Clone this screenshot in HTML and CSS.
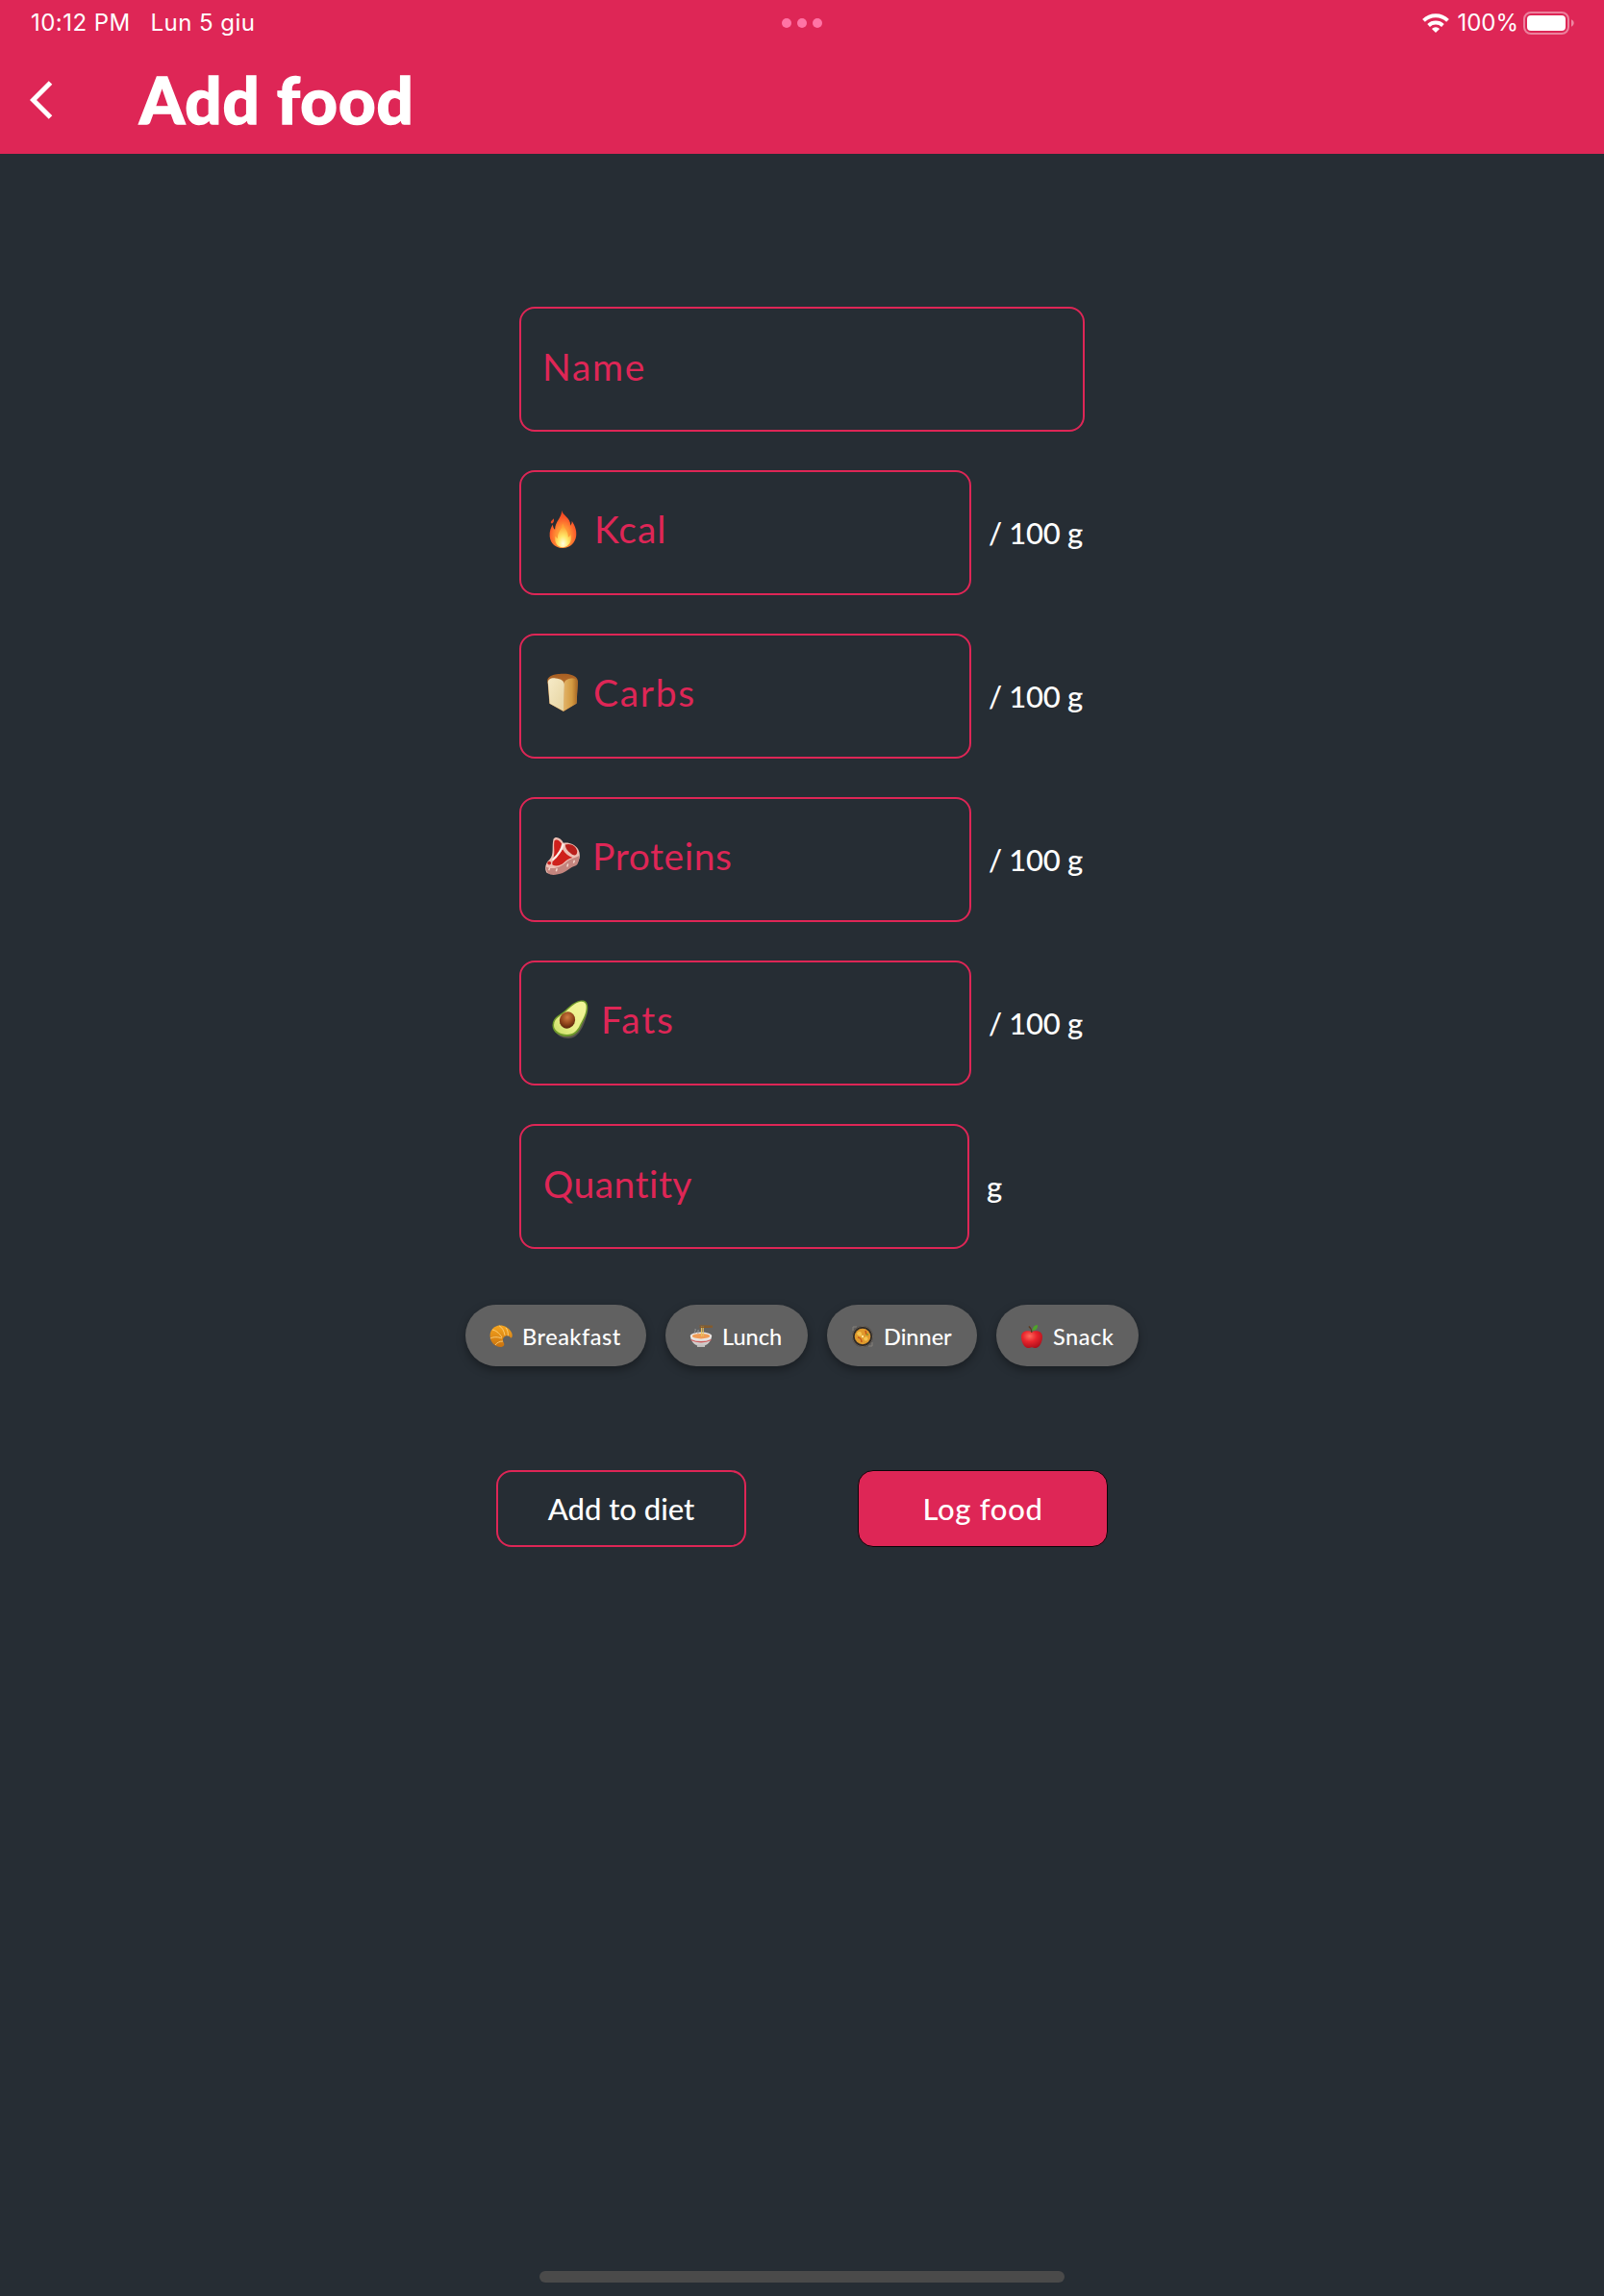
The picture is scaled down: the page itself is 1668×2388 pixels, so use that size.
FILE: index.html
```html
<!DOCTYPE html>
<html lang="en">
<head>
<meta charset="utf-8">
<title>Add food</title>
<link rel="stylesheet" href="styles.css">
</head>
<body>
<svg class="defs" width="0" height="0" aria-hidden="true">
  <defs>
    <radialGradient id="flame" cx=".5" cy=".7" r=".7"><stop offset="0" stop-color="#ffb63a"/><stop offset=".4" stop-color="#ff8f35"/><stop offset=".7" stop-color="#fb5a2a"/><stop offset="1" stop-color="#e93c1c"/></radialGradient>
    <radialGradient id="flameCore" cx=".5" cy=".85" r=".7"><stop offset="0" stop-color="#fffde0"/><stop offset=".45" stop-color="#ffe869"/><stop offset="1" stop-color="#ffa033"/></radialGradient>
    <linearGradient id="crust" x1="0" y1="0" x2="0" y2="1"><stop offset="0" stop-color="#a85f22"/><stop offset="1" stop-color="#d99a4e"/></linearGradient>
    <linearGradient id="crumb" x1="0" y1="0" x2="1" y2="1"><stop offset="0" stop-color="#f7ebc8"/><stop offset="1" stop-color="#e5d3a0"/></linearGradient>
    <linearGradient id="loafSide" x1="0" y1="0" x2="1" y2="0"><stop offset="0" stop-color="#e2b469"/><stop offset=".6" stop-color="#d39a40"/><stop offset="1" stop-color="#a56524"/></linearGradient>
    <linearGradient id="avoFlesh" x1="1" y1="0" x2="0" y2="1"><stop offset="0" stop-color="#f3f59a"/><stop offset=".6" stop-color="#e9f08a"/><stop offset="1" stop-color="#c6dc62"/></linearGradient>
    <radialGradient id="pit" cx=".42" cy=".35" r=".65"><stop offset="0" stop-color="#cf7d42"/><stop offset=".6" stop-color="#93461b"/><stop offset="1" stop-color="#5c260b"/></radialGradient>
    <linearGradient id="pastry" x1="0" y1="0" x2="0" y2="1"><stop offset="0" stop-color="#f6a51e"/><stop offset="1" stop-color="#c9720f"/></linearGradient>
    <linearGradient id="bowl" x1="0" y1="0" x2="0" y2="1"><stop offset="0" stop-color="#f7f4f2"/><stop offset="1" stop-color="#bdbab9"/></linearGradient>
    <radialGradient id="apple" cx=".4" cy=".3" r=".75"><stop offset="0" stop-color="#ff6a5c"/><stop offset=".45" stop-color="#e8242c"/><stop offset="1" stop-color="#a80f1b"/></radialGradient>
  </defs>
</svg>

<header class="header">
  <div class="status">
    <div class="status-side">
      <span>10:12 PM</span>
      <span>Lun 5 giu</span>
    </div>
    <div class="dots"><i></i><i></i><i></i></div>
    <div class="status-side status-right">
      <svg class="wifi" viewBox="0 0 28 20"><path d="M14 20 9.900 15.900a6.200 6.200 0 0 1 8.200 0z" fill="#fff"/><path d="M6.600 12.500a10.800 10.800 0 0 1 14.800 0M1.500 7.300a17.900 17.900 0 0 1 25 0" fill="none" stroke="#fff" stroke-width="3.900"/></svg>
      <span class="charge">100%</span>
      <svg class="battery" viewBox="0 0 54 24"><rect x="1" y="1" width="46" height="22" rx="7" fill="none" stroke="#fff" stroke-opacity=".42" stroke-width="2"/><rect x="4" y="4" width="40" height="16" rx="4" fill="#fff"/><path d="M50 8.300c3.600 1.600 3.600 5.800 0 7.400z" fill="#fff" fill-opacity=".45"/></svg>
    </div>
  </div>
  <div class="nav">
    <svg class="back" viewBox="0 0 24 40"><path d="M21.500 2 3.500 20l18 18" fill="none" stroke="#fff" stroke-width="5"/></svg>
    <h1 class="title">Add food</h1>
  </div>
</header>

<main class="main">
  <form class="form">
    <div class="row">
      <div class="field field-wide"><span class="label-name">Name</span></div>
    </div>
    <div class="row">
      <div class="field field-up">
        <svg class="emoji" viewBox="0 0 36 48"><path d="M17 1c.6 6 11 9 11 19 1-1.500 1.800-3.300 1.600-5.500C33 19 36 26 35 33c-1.200 9-8 15-16.500 15S3 43 2 33.500C1.400 27 3.500 22 5.800 18.500c.4 3 1 5 2.700 6.500C9 14 17 11 17 1z" fill="url(#flame)"/><path d="M6.500 11c1.500 2 .7 4-.4 5.500-.8 1-2.100 1-2.600 0C2.700 14.500 6 13 6.500 11z" fill="#e84d26"/><path d="M18 17c2 6 7.500 10 7 17.500 1.500-.7 2.500-2 3-3.500C30.500 39 26 47 18.500 47S7.500 41 9 33c.8 1.500 1.700 2.500 3 3C11 28 18 24 18 17z" fill="url(#flameCore)"/></svg>
        <span class="label-kcal">Kcal</span>
      </div>
      <span class="unit">/ 100 g</span>
    </div>
    <div class="row">
      <div class="field field-up">
        <svg class="emoji" viewBox="0 0 36 44"><path d="M1 11C-1 3 9 1 18 .8S37 3 35.500 12L34 35 19 44 3 35z" fill="url(#crust)"/><path d="M20 13c-.5-6 6-7 10-7 5 .5 6 3 5 8l-1 20.500L19 43.500z" fill="url(#loafSide)"/><path d="M1.500 13C0 7 5 5.500 10 6c6 .4 11 3 10 9L19 43.500 3.300 35z" fill="url(#crumb)"/></svg>
        <span class="label-carbs">Carbs</span>
      </div>
      <span class="unit">/ 100 g</span>
    </div>
    <div class="row">
      <div class="field field-up">
        <svg class="emoji" viewBox="0 0 38 42"><path d="M9 3c2-4 8-2 11 4 6-1 13 2 16 7 3 6 2 12-2 16-6 2-8 5-15 8-6 2-13 4-17 2-3-4-2-11 3-15 5-5 2-14 4-22z" fill="#eebfb4"/><path d="M1 33c8 4 16 0 22-5 4-4 9-4 14-7 0 6-1 10-4 11-6 2-8 5-14 8-6 2-13 3-16 0-1-2-2-4-2-7z" fill="#c4857e"/><path d="M4 37l1-3M12 38l1-3M24 33l1-3M31 29l1-3" stroke="#f5d9cf" stroke-width="1.500"/><path d="M10 5c2-3 6-1 8 3-1 6-4 11-9 15 2-6 0-11 1-18z" fill="#ce1f1c"/><path d="M22 9c5-2 12 1 13 7 0 4-2 5-5 4-4-3-8-6-8-11z" fill="#b9201c"/><path d="M19 14c3 5 7 8 11 9-4 1-6 2-9 5-4 4-9 5-13 3-2-5 7-10 11-17z" fill="#cf211c"/><path d="M20 8c-2 7-5 12-12 18" fill="none" stroke="#fdeee8" stroke-width="2"/><circle cx="4.500" cy="29" r="2" fill="#c7221f"/></svg>
        <span class="label-proteins">Proteins</span>
      </div>
      <span class="unit">/ 100 g</span>
    </div>
    <div class="row">
      <div class="field field-up field-inset">
        <svg class="emoji" viewBox="0 0 38 40"><path d="M33 2c6 2 5 10 2 18-3 9-8 20-18 20-6 0-12-3-14-8z" fill="#5a574d"/><path d="M29 .8c6-1.500 9 2 8 9-1 8-4 11-6.500 17C27.500 34 23 38 15.500 38S0 33.500.5 26C1 17 9 15.500 14 10.500 19 6 23 2 29 .8z" fill="#6f9a2b"/><path d="M29 2c5-1 7.500 2 6.500 8-1 7-4 11-6.500 16-2.500 6-7 10-13.500 10S1.500 32 2 26c.6-8 8-9.500 13-14.500C20 7 24 3 29 2z" fill="url(#avoFlesh)"/><ellipse cx="16" cy="21" rx="8" ry="8.800" transform="rotate(25 16 21)" fill="url(#pit)"/></svg>
        <span class="label-fats">Fats</span>
      </div>
      <span class="unit">/ 100 g</span>
    </div>
    <div class="row">
      <div class="field field-qty"><span class="label-quantity">Quantity</span></div>
      <span class="unit">g</span>
    </div>
  </form>

  <div class="chips">
    <div class="chip chip-breakfast">
      <svg class="chip-icon" viewBox="0 0 24 24"><path d="M8 1C13-.5 20 2 23 8c1.500 3 .5 6-1 5.500-1-2-3-2.500-5-2-3 1-4 4-2 7.500 1 2-.5 3.500-2.500 4C6 23.500 1 18 .6 12 .4 7 3 2.500 8 1z" fill="url(#pastry)"/><path d="M3 5c3 .5 7 3 10 8M10 .8c3 1.500 5 5 6 10M.9 14c4-2 8-1.500 12 0M17 2.800c1.500 2 2.500 5 2.300 8.500M6 21c1.500-2.500 4.500-4 8-4" fill="none" stroke="#ffd98a" stroke-width=".8"/></svg>
      <span>Breakfast</span>
    </div>
    <div class="chip chip-lunch">
      <svg class="chip-icon" viewBox="0 0 24 24"><path d="M1 11h22c0 5-3 9-7 10.500V23H8v-1.500C4 20 1 16 1 11z" fill="url(#bowl)"/><ellipse cx="12" cy="11.500" rx="11.300" ry="4" fill="#ece7e3"/><ellipse cx="12" cy="11.700" rx="9.200" ry="2.700" fill="#ef9b55"/><path d="M1.500 15.500c6 3 15 3 21 0" fill="none" stroke="#cf5a5a" stroke-width="1.300"/><path d="M12.500 12V1.500M14.200 12V1.500" stroke="#e8c05c" stroke-width="1.100"/><path d="M10.500.9 24 1.200M10.500 2.600 24 2.200" stroke="#8f5a1d" stroke-width="1"/><path d="M6 9c-1.500-2 1-3 0-5M9 9c-1-2 .8-2.500 0-4" fill="none" stroke="#9a9a9a"/></svg>
      <span>Lunch</span>
    </div>
    <div class="chip chip-dinner">
      <svg class="chip-icon" viewBox="0 0 24 24"><path d="M2 6V2h4M18 22h4v-4" fill="none" stroke="#85807a" stroke-width="1"/><circle cx="12" cy="12" r="11" fill="#302b28"/><circle cx="12" cy="12" r="10.600" fill="none" stroke="#837c75" stroke-width=".7"/><circle cx="12" cy="12" r="8.300" fill="#e09a2c"/><path d="M6 9c2-3 4-3 5 0s-3 4-5 0zM13 14c2-3 5-2 4.500 1-1 2.500-4 2-4.500-1z" fill="#f4c34e"/><path d="M7 13c2 0 4 2 4 5M15 6l1 4" fill="none" stroke="#c4551b" stroke-width="1.500"/><circle cx="12" cy="12" r="1.200" fill="#ffe79a"/><circle cx="17" cy="10" r="1" fill="#7f9b2c"/></svg>
      <span>Dinner</span>
    </div>
    <div class="chip chip-snack">
      <svg class="chip-icon" viewBox="0 0 24 24"><path d="M12 7.500c3-2 11-2 11 5 0 6-3.500 11.500-7 11.500-2 0-2.500-.8-4-.8s-2 .8-4 .8c-3.500 0-7-5.500-7-11.500 0-7 8-7 11-5z" fill="url(#apple)"/><path d="M11.800 8c0-3-1-5-3-6.500" fill="none" stroke="#5c3a1c" stroke-width="1.200"/><path d="M12.500 6c0-3 2-6 5.500-6 .5 3-1.500 6-5.500 6z" fill="#4fa32b"/></svg>
      <span>Snack</span>
    </div>
  </div>

  <div class="actions">
    <div class="btn btn-outline">Add to diet</div>
    <div class="btn btn-solid">Log food</div>
  </div>
</main>
<div class="home-bar"></div>
</body>
</html>
```
FILE: styles.css
```css
* { box-sizing: border-box; }
html, body { height: 100%; }
body {
  margin: 0;
  display: flex;
  flex-direction: column;
  background: #262d34;
  color: #fff;
  font-family: Lato, "Liberation Sans", sans-serif;
}
.defs { position: absolute; }
span { white-space: nowrap; }

.header { height: 160px; background: #de2656; flex: none; }
.status {
  display: grid;
  grid-template-columns: 1fr auto 1fr;
  height: 48px;
  padding: 0 30px 0 32px;
  align-items: center;
  font: 400 24px/28px Inter, sans-serif;
  letter-spacing: .45px;
}
.status-side { display: flex; align-items: center; gap: 21px; }
.status-right { justify-content: flex-end; gap: 0; }
.dots { display: flex; gap: 6px; margin-left: -2px; }
.dots i { width: 10px; height: 10px; border-radius: 50%; background: #ff74a5; }
.wifi { width: 28px; height: 20px; margin-right: 8px; }
.charge { letter-spacing: 0; }
.battery { width: 54px; height: 24px; margin-left: 5px; }
.nav { display: flex; align-items: center; height: 112px; padding-left: 31px; }
.back { width: 24px; height: 40px; }
.title {
  margin: 0 0 2px 90px;
  font-size: 67px;
  line-height: 80px;
  font-weight: 900;
  letter-spacing: 1px;
  -webkit-text-stroke: 1.4px #fff;
}

.main { flex: 1; display: flex; flex-direction: column; align-items: center; padding-top: 159px; }
.form { display: flex; flex-direction: column; gap: 40px; width: 588px; }
.row { display: flex; align-items: center; }
.field {
  flex: none;
  display: flex;
  align-items: center;
  gap: 14px;
  width: 470px;
  height: 130px;
  padding: 0 24px 6px;
  border: 2px solid #de2656;
  border-radius: 16px;
  color: #de2656;
  font-size: 39px;
  line-height: 48px;
}
.field-wide { width: 588px; padding-left: 22px; }
.field-qty { width: 468px; padding-left: 23px; }
.field-up { padding-bottom: 8px; }
.field-inset { padding-left: 32px; }
.emoji { flex: none; width: 38px; height: 40px; }
.label-name { letter-spacing: 1.7px; }
.label-kcal { letter-spacing: 1px; }
.label-carbs { letter-spacing: 1.700px; margin-left: -1px; }
.label-proteins { letter-spacing: .6px; margin-left: -2px; }
.label-fats { letter-spacing: 1.900px; margin-left: -1px; }
.label-quantity { letter-spacing: .5px; }
.unit { margin-left: 18px; font-size: 31px; line-height: 40px; font-weight: 500; letter-spacing: -.3px; }

.chips { display: flex; gap: 20px; margin-top: 58px; }
.chip {
  display: flex;
  align-items: center;
  gap: 11px;
  height: 64px;
  padding: 1px 0 0 25px;
  border-radius: 32px;
  background: #616161;
  box-shadow: 0 4px 10px rgba(0, 0, 0, .35);
  font-size: 23.5px;
  line-height: 30px;
  font-weight: 500;
}
.chip-icon { flex: none; width: 24px; height: 24px; margin-top: 1px; }
.chip-breakfast { width: 188px; letter-spacing: .5px; }
.chip-lunch { width: 148px; }
.chip-dinner { width: 156px; }
.chip-snack { width: 148px; letter-spacing: .5px; }
.chip span { margin-left: -1px; }

.actions { display: flex; gap: 116px; margin-top: 108px; }
.btn {
  display: flex;
  align-items: center;
  justify-content: center;
  width: 260px;
  height: 80px;
  border: 2px solid #de2656;
  border-radius: 16px;
  font-size: 31px;
  line-height: 40px;
  font-weight: 500;
}
.btn-solid { background: #de2656; border: 1px solid #0c0508; letter-spacing: .7px; }

.home-bar { flex: none; align-self: center; width: 546px; height: 12px; margin-bottom: 14px; border-radius: 6px; background: #4a4a4a; }
```
